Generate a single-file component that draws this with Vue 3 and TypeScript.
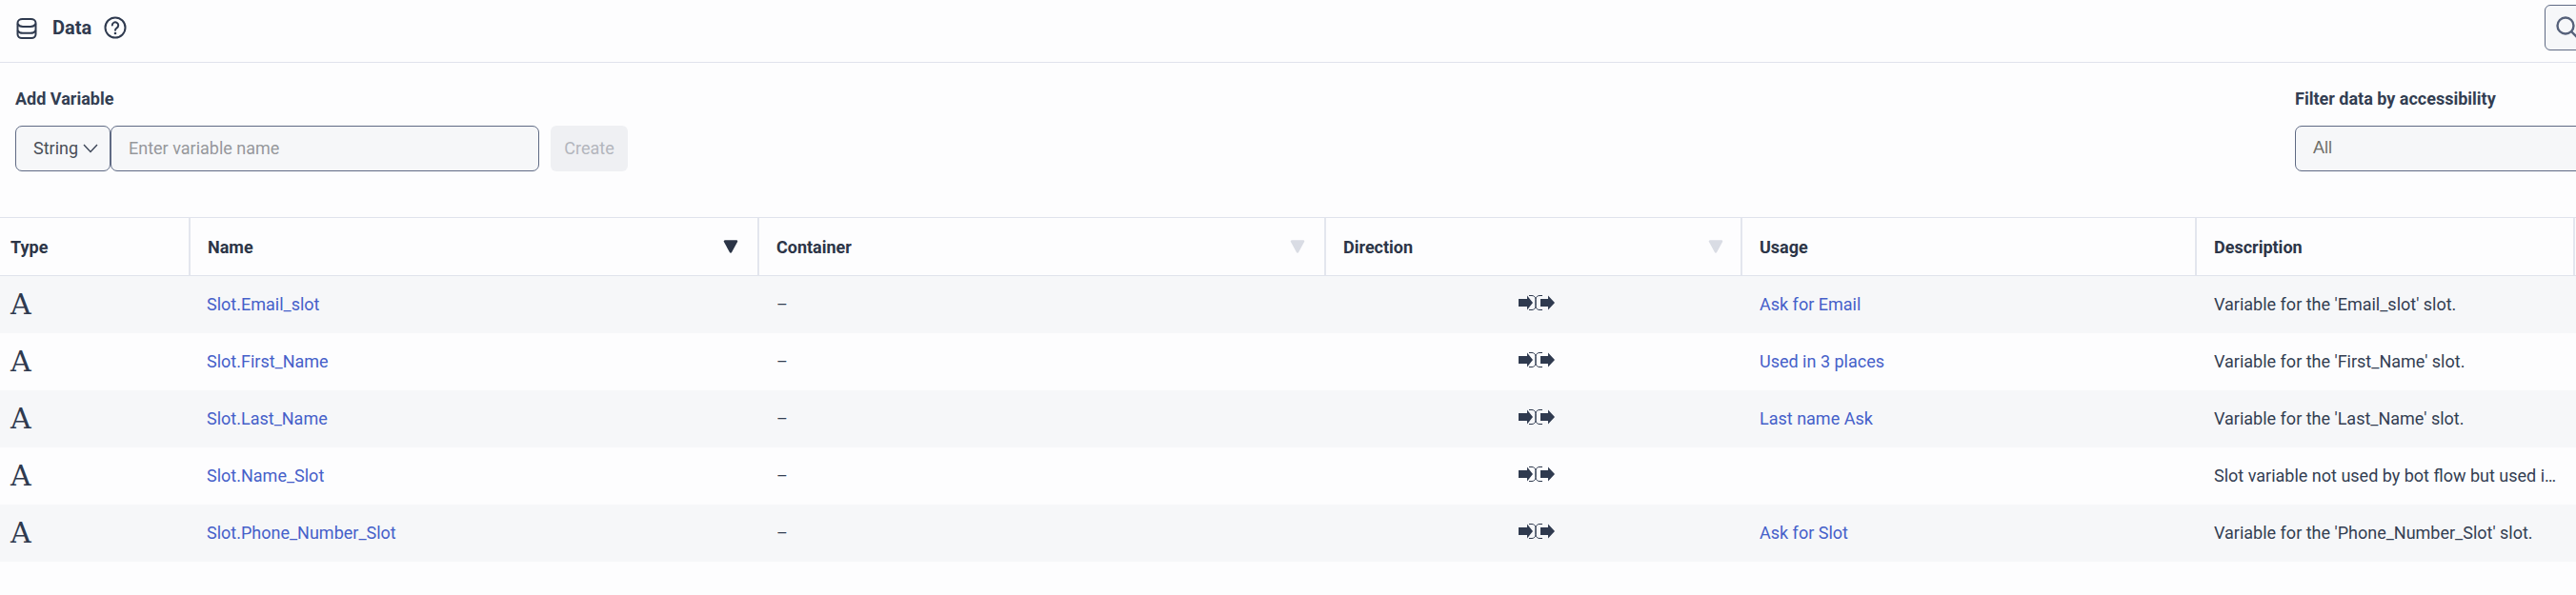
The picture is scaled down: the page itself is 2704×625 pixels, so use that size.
<script setup lang="ts">
interface Row { name: string; usage: string; description: string }
const rows: Row[] = [
  { name: 'Slot.Email_slot', usage: 'Ask for Email', description: "Variable for the 'Email_slot' slot." },
  { name: 'Slot.First_Name', usage: 'Used in 3 places', description: "Variable for the 'First_Name' slot." },
  { name: 'Slot.Last_Name', usage: 'Last name Ask', description: "Variable for the 'Last_Name' slot." },
  { name: 'Slot.Name_Slot', usage: '', description: 'Slot variable not used by bot flow but used i…' },
  { name: 'Slot.Phone_Number_Slot', usage: 'Ask for Slot', description: "Variable for the 'Phone_Number_Slot' slot." },
]
</script>

<template>
  <div class="page">
    <header class="topbar">
      <svg class="db" width="24" height="24" viewBox="0 0 24 24" fill="none" stroke="#2f3a4f" stroke-width="2">
        <path d="M2.500 7c0-2.400 2.500-4 5-4h9c2.500 0 5 1.600 5 4v12c0 2.400-2 4-4.500 4h-10c-2.500 0-4.500-1.600-4.500-4z" />
        <path d="M2.500 8c1 2 3 3 5.500 3h8c2.500 0 4.500-1 5.500-3M2.500 15c1 2 3 2.800 5.500 2.800h8c2.500 0 4.500-.8 5.500-2.800" />
      </svg>
      <span class="title">Data</span>
      <svg class="help" width="24" height="24" viewBox="0 0 24 24" fill="none" stroke="#2f3a4f" stroke-width="2">
        <circle cx="12" cy="12" r="10.500" />
        <path d="M8.800 9.500a3.200 3.200 0 1 1 4.800 2.800c-1 .6-1.600 1.100-1.600 2.400" stroke-linecap="round" />
        <circle cx="12" cy="18" r="1.300" fill="#2f3a4f" stroke="none" />
      </svg>
      <div class="spacer"></div>
      <button class="search" aria-label="Search">
        <svg width="26" height="26" viewBox="0 0 26 26" fill="none" stroke="#56617a" stroke-width="2.400">
          <circle cx="11" cy="11" r="8.500" />
          <path d="M17 17l7 7" />
        </svg>
      </button>
    </header>

    <section class="controls">
      <div class="add">
        <label class="lbl">Add Variable</label>
        <div class="add-row">
          <div class="type-select">
            <span>String</span>
            <svg width="16" height="10" viewBox="0 0 16 10" fill="none" stroke="#3d4658" stroke-width="1.400">
              <path d="M1 1l7 7.500L15 1" />
            </svg>
          </div>
          <input class="name-input" type="text" placeholder="Enter variable name" />
          <button class="create" disabled>Create</button>
        </div>
      </div>
      <div class="filter">
        <label class="lbl">Filter data by accessibility</label>
        <div class="filter-select">All</div>
      </div>
    </section>

    <div class="table">
      <div class="row head">
        <div class="cell c1">Type</div>
        <div class="cell c2">Name
          <svg class="tri" width="16" height="14" viewBox="0 0 16 14" fill="#2c3547"><path d="M2 1.500h12L8 12.500z" stroke="#2c3547" stroke-width="2.500" stroke-linejoin="round" /></svg>
        </div>
        <div class="cell c3">Container
          <svg class="tri" width="16" height="14" viewBox="0 0 16 14" fill="#d9dce4"><path d="M2 1.500h12L8 12.500z" stroke="#d9dce4" stroke-width="2.500" stroke-linejoin="round" /></svg>
        </div>
        <div class="cell c4">Direction
          <svg class="tri" width="16" height="14" viewBox="0 0 16 14" fill="#d9dce4"><path d="M2 1.500h12L8 12.500z" stroke="#d9dce4" stroke-width="2.500" stroke-linejoin="round" /></svg>
        </div>
        <div class="cell c5">Usage</div>
        <div class="cell c6">Description</div>
      </div>
      <div v-for="r in rows" :key="r.name" class="row body">
        <div class="cell c1">
          <span class="type-a">A</span>
        </div>
        <div class="cell c2"><a class="link">{{ r.name }}</a></div>
        <div class="cell c3">–</div>
        <div class="cell c4 dir">
          <svg width="38" height="16" viewBox="0 0 38 16">
            <g fill="none" stroke="#2f3a4f" stroke-width="1">
              <path d="M11 .5h3c2 0 4 1.500 4 4v7c0 2.500-2 4-4 4h-3" />
              <path d="M25 .5h-3c-2 0-4 1.500-4 4v7c0 2.500 2 4 4 4h3" />
            </g>
            <g fill="#2f3a4f">
              <path d="M0 4h9V.5l6 7.500-6 7.500V12H0z" />
              <path d="M23 4h8V.5l7 7.500-7 7.500V12h-8z" />
            </g>
          </svg>
        </div>
        <div class="cell c5"><a class="link">{{ r.usage }}</a></div>
        <div class="cell c6">{{ r.description }}</div>
      </div>
    </div>
  </div>
</template>

<style>
html, body { margin: 0; background: #fdfdfe; overflow: hidden; }
</style>

<style scoped>
.page {
  width: 2704px;
  height: 625px;
  overflow: hidden;
  background: #fdfdfe;
  font-family: Roboto, "Liberation Sans", sans-serif;
  color: #2f3a4f;
}
.topbar {
  height: 66px;
  box-sizing: border-box;
  border-bottom: 1px solid #e0e3ec;
  padding: 0 0 7px 16px;
  display: flex;
  align-items: center;
}
.db { margin-right: 15px; flex: none; }
.title { font-size: 20px; font-weight: 700; margin-right: 13px; }
.spacer { flex: 1; }
.search {
  width: 60px;
  height: 48px;
  flex: none;
  margin-right: -27px;
  background: #f6f7f9;
  border: 1.500px solid #5f6a84;
  border-radius: 6px;
  padding: 0 0 0 10px;
  display: flex;
  align-items: center;
}
.controls {
  height: 162px;
  display: flex;
  justify-content: space-between;
}
.add { padding: 26px 0 0 16px; flex: none; }
.filter { padding-top: 26px; width: 330px; flex: none; margin-right: -35px; }
.lbl { display: block; font-size: 18px; font-weight: 700; line-height: 24px; margin-bottom: 16px; color: #333e52; }
.add-row { display: flex; align-items: stretch; height: 48px; }
.type-select {
  width: 100px;
  flex: none;
  box-sizing: border-box;
  background: #f6f7f9;
  border: 1.500px solid #5f6a84;
  border-radius: 7px;
  display: flex;
  align-items: center;
  gap: 5px;
  padding-left: 18px;
  padding-bottom: 1px;
  font-size: 18px;
  color: #4a4f57;
}
.name-input {
  width: 450px;
  flex: none;
  box-sizing: border-box;
  background: #f6f7f9;
  border: 1.500px solid #5f6a84;
  border-radius: 7px;
  padding: 0 0 1px 18px;
  font: 18px Roboto, sans-serif;
  outline: none;
}
.name-input::placeholder { color: #96989c; opacity: 1; }
.create {
  width: 81px;
  flex: none;
  margin-left: 12px;
  border: 0;
  border-radius: 6px;
  background: #eff0f3;
  color: #b3b6bd;
  font: 18px Roboto, sans-serif;
  padding: 0 0 1px;
}
.filter-select {
  height: 48px;
  box-sizing: border-box;
  background: #f6f7f9;
  border: 1.500px solid #5f6a84;
  border-radius: 7px;
  padding: 0 0 1px 18px;
  display: flex;
  align-items: center;
  font: 18px "Liberation Sans", Arial, sans-serif;
  color: #70706a;
}
.table { border-top: 1px solid #e0e3ec; }
.row { display: grid; grid-template-columns: 200px 597px 595px 437px 477px 397px; }
.head {
  height: 61px;
  box-sizing: border-box;
  border-bottom: 1px solid #e0e3ec;
  font-size: 18px;
  font-weight: 700;
}
.head .cell { border-right: 2px solid #e3e6ee; color: #2c3547; }
.cell {
  display: flex;
  align-items: center;
  box-sizing: border-box;
  padding-left: 18px;
  min-width: 0;
  position: relative;
  white-space: nowrap;
}
.head .c1 { padding-left: 11px; }
.body { height: 60px; font-size: 18px; color: #333e52; }
.body .cell { padding-bottom: 1px; }
.body .c1 { padding-left: 11px; padding-bottom: 0; }
.body .c2 { padding-left: 17px; }
.body:nth-child(even) { background: #f6f7f9; }
.link { color: #4560c9; }
.type-a {
  font-family: "DejaVu Serif", "Liberation Serif", serif;
  font-size: 30px;
  line-height: 1;
  color: #2f3a4f;
}
.body .dir { justify-content: center; padding: 0 0 4px 5px; }
.tri {
  position: absolute;
  right: 18px;
  top: 23px;
}
.c2 .tri, .c3 .tri { right: 20px; }
</style>
